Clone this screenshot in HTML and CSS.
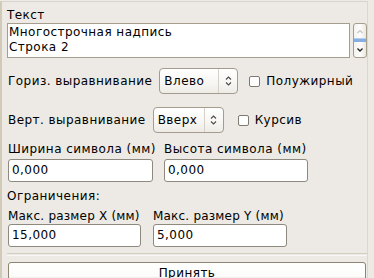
FILE: index.html
```
<!DOCTYPE html>
<html>
<head>
<meta charset="utf-8">
<link rel="stylesheet" href="styles.css">
</head>
<body>
<div class="frame">
  <div class="cap">Текст</div>
  <div class="text-row">
    <div class="textarea">Многострочная надпись<br>Строка 2</div>
    <div class="vscroll">
      <svg width="14" height="35" viewBox="0 0 14 35">
        <path d="M4.5 10 L7 7.5 L9.5 10" fill="none" stroke="#c4c4c4" stroke-width="1.2"/>
        <rect x="1" y="15" width="12" height="4" fill="#86aee0"/>
        <rect x="1" y="15" width="12" height="1" fill="#b4cff0"/>
        <path d="M4.5 25.5 L7 28 L9.5 25.5" fill="none" stroke="#222" stroke-width="1.3"/>
      </svg>
    </div>
  </div>

  <div class="row row1">
    <span class="lbl">Гориз. выравнивание</span>
    <div class="combo combo-h">
      <span class="combo-text">Влево</span>
      <span class="combo-arrows">
        <svg width="7" height="10" viewBox="0 0 7 10"><path d="M1 3.5 L3.5 1 L6 3.5 M1 6.5 L3.5 9 L6 6.5" fill="none" stroke="#4a4a4a" stroke-width="1.1"/></svg>
      </span>
    </div>
    <label class="check check-b"><span class="box"></span>Полужирный</label>
  </div>

  <div class="row row2">
    <span class="lbl">Верт. выравнивание</span>
    <div class="combo combo-v">
      <span class="combo-text">Вверх</span>
      <span class="combo-arrows">
        <svg width="7" height="10" viewBox="0 0 7 10"><path d="M1 3.5 L3.5 1 L6 3.5 M1 6.5 L3.5 9 L6 6.5" fill="none" stroke="#4a4a4a" stroke-width="1.1"/></svg>
      </span>
    </div>
    <label class="check check-i"><span class="box"></span>Курсив</label>
  </div>

  <div class="pair pair1">
    <div class="field f-w">
      <div class="flabel">Ширина символа (мм)</div>
      <div class="input">0,000</div>
    </div>
    <div class="field f-h">
      <div class="flabel">Высота символа (мм)</div>
      <div class="input">0,000</div>
    </div>
  </div>

  <div class="section">Ограничения:</div>

  <div class="pair pair2">
    <div class="field f-x">
      <div class="flabel tight">Макс. размер X (мм)</div>
      <div class="input">15,000</div>
    </div>
    <div class="field f-y">
      <div class="flabel tight">Макс. размер Y (мм)</div>
      <div class="input">5,000</div>
    </div>
  </div>

  <div class="separator"></div>

  <div class="button">Принять</div>
</div>
</body>
</html>
```
FILE: styles.css
```
html, body {
  margin: 0;
  padding: 0;
  background: #edeae5;
  font-family: "DejaVu Sans", sans-serif;
  font-size: 12px;
  line-height: 14px;
  letter-spacing: 0.45px;
  color: #000;
  overflow: hidden;
}

.frame {
  margin-top: 1px;
  width: 360px;
  height: 300px;
  border-top: 1px solid #d9d4cb;
  border-left: 2px solid #d2cab9;
  border-right: 1px solid #dcd7ce;
  padding: 6px 0 0 5px;
}

.cap {
  height: 14px;
  margin-bottom: 1px;
}

.text-row {
  display: flex;
  gap: 3px;
  height: 35px;
}

.textarea {
  box-sizing: border-box;
  width: 343px;
  height: 35px;
  background: #fff;
  border: 1px solid #a59d8d;
  padding: 1px 0 0 1px;
  line-height: 15px;
}

.vscroll {
  box-sizing: border-box;
  width: 14px;
  height: 35px;
  border: 1px solid #a59d8d;
  border-radius: 3px;
  background: linear-gradient(to right, #f4f2ee, #fdfdfc 50%, #ebe8e2);
  position: relative;
  overflow: hidden;
}

.vscroll svg {
  position: absolute;
  left: -1px;
  top: -1px;
}

.row {
  display: flex;
  align-items: center;
  height: 26px;
}

.row1 { margin-top: 10px; }
.row2 { margin-top: 13px; }

.lbl {
  margin-left: 1px;
}

.combo {
  box-sizing: border-box;
  height: 26px;
  margin-left: 7px;
  display: flex;
  align-items: stretch;
  border: 1px solid #a39c8f;
  border-radius: 4px;
  background: linear-gradient(#ffffff, #f7f6f3 60%, #eeebe6);
}

.combo-h { width: 79px; }
.combo-v { width: 71px; }

.combo-text {
  flex: 1;
  display: flex;
  align-items: center;
  padding-left: 4px;
  border-right: 1px solid #d6d1c8;
}

.combo-arrows {
  width: 18px;
  display: flex;
  align-items: center;
  justify-content: center;
}

.check {
  display: flex;
  align-items: center;
}

.check-b { margin-left: 11px; }
.check-i { margin-left: 14px; }

.box {
  box-sizing: border-box;
  width: 11px;
  height: 11px;
  border: 1px solid #7f7a70;
  border-radius: 2px;
  background: #fff;
  margin-right: 6px;
}

.pair {
  display: flex;
}

.pair1 { margin-top: 9px; gap: 11px; }
.pair2 { margin-top: 6px; gap: 12px; }

.field {
  display: flex;
  flex-direction: column;
}

.flabel {
  height: 14px;
  white-space: nowrap;
}

.flabel.tight {
  letter-spacing: 0.2px;
}

.pair1 .flabel { margin-bottom: 3px; }
.pair2 .flabel { margin-bottom: 1px; }

.f-w { margin-left: 1px; width: 145px; }
.f-h { width: 144px; }
.f-x { margin-left: 1px; width: 133px; }
.f-y { width: 134px; }

.input {
  box-sizing: border-box;
  height: 23px;
  background: #fff;
  border: 1px solid #8e897f;
  border-radius: 3px;
  padding: 0 0 0 3px;
  line-height: 21px;
}

.section {
  margin-top: 7px;
  height: 14px;
}

.separator {
  margin-top: 6px;
  width: 360px;
  height: 1px;
  border-top: 1px solid #d3cdc2;
  border-bottom: 1px solid #f8f7f4;
}

.button {
  box-sizing: border-box;
  margin-top: 6px;
  margin-left: 1px;
  width: 358px;
  height: 26px;
  border: 1px solid #8f8472;
  border-radius: 3px;
  background: linear-gradient(#ffffff, #fcfcfb 55%, #f0eeea 62%, #eceae5);
  text-align: center;
  padding-top: 3px;
}
```
